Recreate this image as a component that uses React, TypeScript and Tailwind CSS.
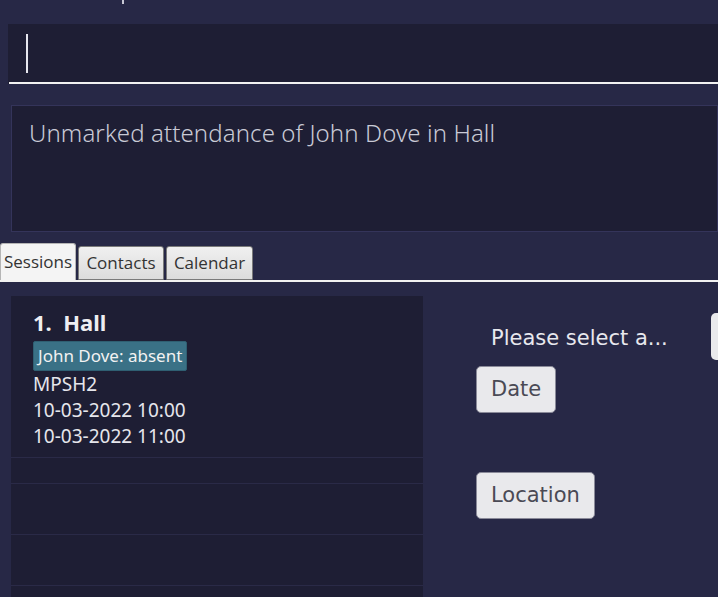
const session = {
    index: 1,
    title: "Hall",
    tags: ["John Dove: absent"],
    location: "MPSH2",
    start: "10-03-2022 10:00",
    end: "10-03-2022 11:00",
};

const emptyRows = ["h-[26px]", "h-[51px]", "h-[51px]", "h-[51px]"];

const tabs = [
    { label: "Sessions", width: "w-[76px]", active: true },
    { label: "Contacts", width: "w-[86px]" },
    { label: "Calendar", width: "w-[87px]" },
];

function Tab({ label, width, active }: { label: string; width: string; active?: boolean }) {
    return (
        <div
            className={
                active
                    ? `${width} h-[37px] flex items-center justify-center rounded-t-[3px] bg-[#f4f4f4] border border-b-0 border-[#b5b5b5] text-[17px] text-[#333]`
                    : `${width} h-[34px] mt-[1px] flex items-center justify-center rounded-t-[3px] bg-gradient-to-b from-[#f0f0f0] to-[#dcdcdc] border border-[#7a7a7a] text-[17px] text-[#333]`
            }
        >
            {label}
        </div>
    );
}

export default function App() {
    return (
        <div className="w-[718px] h-[597px] overflow-hidden bg-[#272846] flex flex-col font-['Noto_Sans',sans-serif]">
            {/* clipped menu bar glyph */}
            <div className="h-[24px] shrink-0 relative">
                <div className="absolute left-[122px] top-0 w-[2px] h-[4px] bg-[#c8c8d4]" />
            </div>

            {/* command box */}
            <div className="ml-[8px] h-[60px] shrink-0 bg-[#1e1e34] flex flex-col">
                <div className="flex-1 flex items-center pl-[18px]">
                    <div className="w-[2px] h-[39px] bg-[#e6e6ee]" />
                </div>
                <div className="ml-[1px] h-[2px] bg-[#f2f2f2]" />
            </div>

            {/* result display */}
            <div className="ml-[11px] mt-[21px] h-[127px] shrink-0 bg-[#1e1e34] border border-[#34345a] px-[17px] pt-[11px]">
                <p className="text-[24px] font-light text-[#c9cad6] leading-[32px] tracking-[0.1px]">
                    Unmarked attendance of John Dove in Hall
                </p>
            </div>

            {/* tabs */}
            <div className="mt-[11px] shrink-0 flex items-end gap-[2px] font-['Open_Sans',sans-serif]">
                {tabs.map((t) => (
                    <Tab key={t.label} label={t.label} width={t.width} active={t.active} />
                ))}
            </div>
            <div className="h-[2px] shrink-0 bg-[#f2f2f2]" />

            {/* content */}
            <div className="mt-[14px] flex flex-1 min-h-0">
                <div className="ml-[11px] w-[412px] bg-[#1e1e34] flex flex-col">
                    <div className="h-[162px] shrink-0 px-[22px] pt-[10px] flex flex-col items-start border-b border-[#2a2a47]">
                        <div className="text-[22px] font-bold text-[#eeeef2] leading-[32px]">
                            {session.index}.&nbsp;&nbsp;{session.title}
                        </div>
                        <div className="flex gap-1 mt-[3px]">
                            {session.tags.map((t) => (
                                <span
                                    key={t}
                                    className="bg-[#3a7186] text-[#f2f2f2] text-[17px] leading-[28px] px-[4px] rounded-[2px] border border-[#2f5f72]"
                                >
                                    {t}
                                </span>
                            ))}
                        </div>
                        <div className="text-[19px] text-[#e6e6ec] leading-[26px]">{session.location}</div>
                        <div className="text-[19px] text-[#e6e6ec] leading-[26px]">{session.start}</div>
                        <div className="text-[19px] text-[#e6e6ec] leading-[26px]">{session.end}</div>
                    </div>
                    {emptyRows.map((h, i) => (
                        <div key={i} className={`${h} shrink-0 border-b border-[#2a2a47]`} />
                    ))}
                </div>

                <div className="flex-1 min-w-0 pl-[53px] pt-[17px] font-['DejaVu_Sans',sans-serif]">
                    <div className="flex items-start">
                        <div className="pl-[15px] pt-[10px] text-[21px] text-[#e8e8ee] leading-[30px] whitespace-nowrap">
                            Please select a...
                        </div>
                        <div className="ml-[43px] w-[40px] h-[47px] rounded-[5px] bg-[#e9e9ec] shrink-0" />
                    </div>
                    <div className="mt-[6px] flex flex-col items-start gap-[59px]">
                        <button className="h-[47px] px-[14px] rounded-[5px] bg-[#e9e9ec] border border-[#8a8a99] text-[21px] text-[#4a4a55]">
                            Date
                        </button>
                        <button className="h-[47px] px-[14px] rounded-[5px] bg-[#e9e9ec] border border-[#8a8a99] text-[21px] text-[#4a4a55]">
                            Location
                        </button>
                    </div>
                </div>
            </div>
        </div>
    );
}
